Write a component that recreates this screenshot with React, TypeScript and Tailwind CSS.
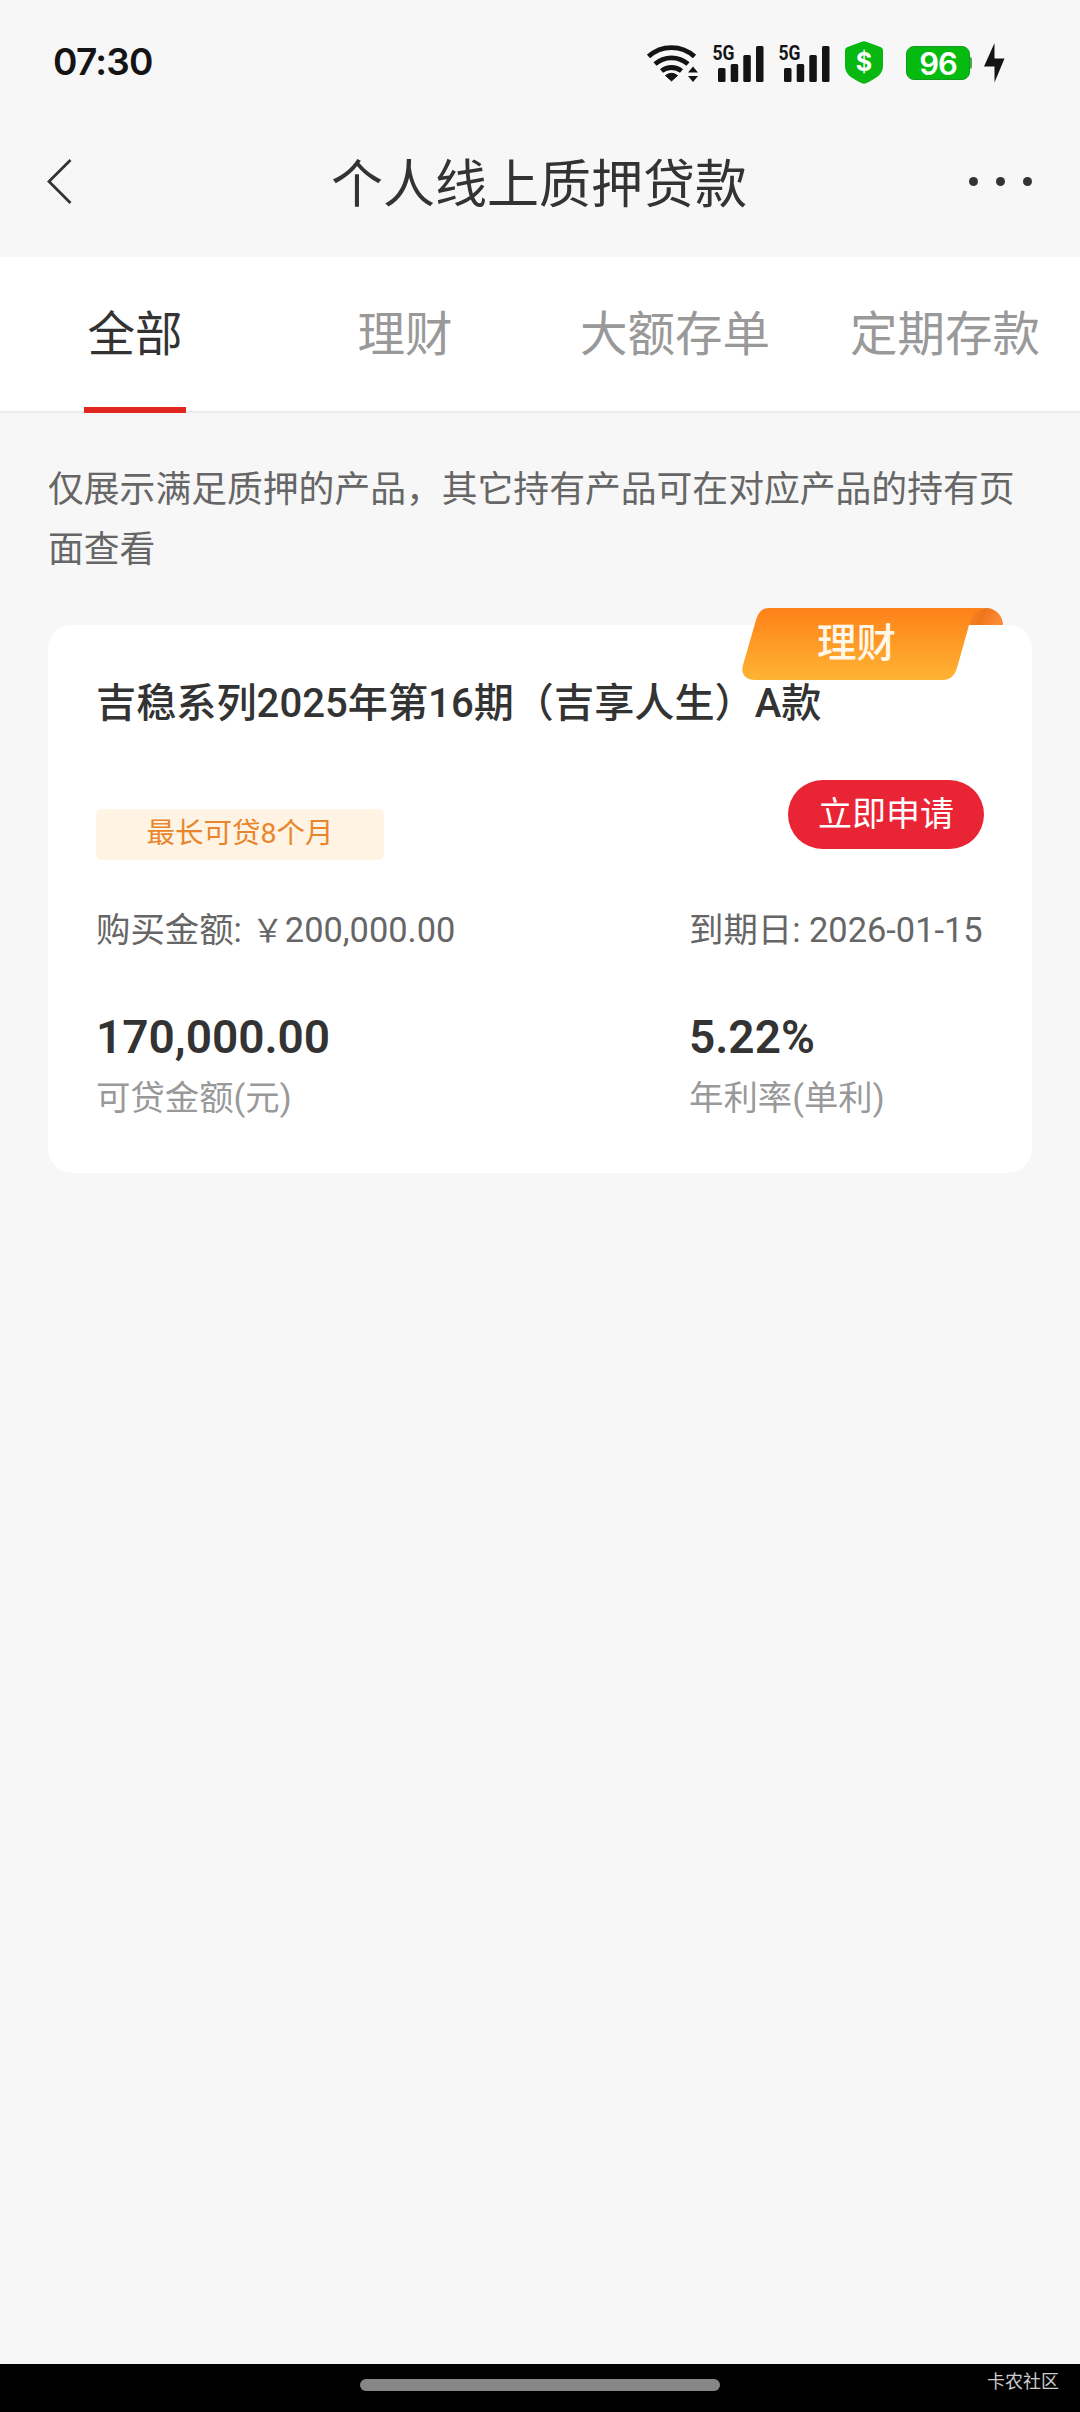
import { useState } from 'react'

const tabs = ['全部', '理财', '大额存单', '定期存款']

const products = [
  {
    type: '理财',
    name: '吉稳系列2025年第16期（吉享人生）A款',
    term: '最长可贷8个月',
    amount: '200,000.00',
    dueDate: '2026-01-15',
    loanable: '170,000.00',
    rate: '5.22%'
  }
]

function WifiIcon() {
  return (
    <svg width="53" height="40" viewBox="0 0 53 40" fill="none" stroke="#141414" strokeWidth="4.8">
      <path d="M1.5 14.5a34 34 0 0 1 46 0" />
      <path d="M8 22a25 25 0 0 1 33 0" />
      <path d="M14.5 29a16 16 0 0 1 20 0" />
      <path d="M18.5 33.5a10 10 0 0 1 12 0L24.5 39z" fill="#141414" stroke="#141414" strokeWidth="1" strokeLinejoin="round" />
      <path d="M41 30.5l5-6 5 6zM41 34l5 6 5-6z" fill="#141414" stroke="none" />
    </svg>
  )
}

function SignalIcon() {
  return (
    <svg className="-mt-[8px]" width="52" height="48" viewBox="0 -8 52 48" fill="#141414">
      <text x="0.5" y="18" fontFamily="Roboto" fontWeight="700" fontSize="21" textLength="22" lengthAdjust="spacingAndGlyphs">
        5G
      </text>
      <rect x="6" y="26" width="7.5" height="14" rx="1.5" />
      <rect x="18.7" y="22" width="7.5" height="18" rx="1.5" />
      <rect x="31.3" y="13" width="7.5" height="27" rx="1.5" />
      <rect x="44" y="4" width="7.5" height="36" rx="1.5" />
    </svg>
  )
}

function ShieldIcon() {
  return (
    <svg width="38" height="43" viewBox="0 0 38 43">
      <path d="M17.5.6a4 4 0 0 1 3 0l15 5.4a3.5 3.5 0 0 1 2.5 3.3V25c0 8-6 12-16.5 17a5 5 0 0 1-5 0C6 37 0 33 0 25V9.3A3.5 3.5 0 0 1 2.5 6z" fill="#06b80f" />
      <text x="19" y="30" textAnchor="middle" fontFamily="Inter" fontWeight="700" fontSize="25" fill="#fff">
        $
      </text>
    </svg>
  )
}

function Battery() {
  return (
    <div className="flex items-center">
      <div className="flex h-[34px] w-[64px] items-center justify-center rounded-[8px] border border-[#149a1c] bg-[#06bb0f] font-[Inter] text-[31px] leading-none font-semibold tracking-[-1px] text-white">
        96
      </div>
      <div className="h-[12px] w-[2px] rounded-r-sm bg-[#4ca851]" />
    </div>
  )
}

function StatusBar() {
  return (
    <div className="flex h-[120px] items-center justify-between pr-[75px] pl-[53px]">
      <span className="pt-[3px] font-[Inter] text-[37px] leading-none font-semibold tracking-[-0.8px] text-[#141414]">07:30</span>
      <div className="flex items-center pt-[4px]">
        <WifiIcon />
        <div className="ml-[12px] flex gap-[14px]">
          <SignalIcon />
          <SignalIcon />
        </div>
        <div className="ml-[15px]">
          <ShieldIcon />
        </div>
        <div className="ml-[23px] pt-[2px]">
          <Battery />
        </div>
        <svg className="mt-[2px] ml-[12px]" width="21" height="40" viewBox="0 0 21 40" fill="#141414">
          <path d="M10.5 0v15.5H20.5L10.5 39.5V23.5H0z" />
        </svg>
      </div>
    </div>
  )
}

function Ribbon({ label }: { label: string }) {
  return (
    <div className="absolute -top-[17px] right-[29px] h-[72px] w-[261px]">
      <svg className="absolute inset-0" width="261" height="72" viewBox="0 0 261 72">
        <defs>
          <linearGradient id="band" x1="0" y1="0" x2="0" y2="1">
            <stop offset="0" stopColor="#fe8119" />
            <stop offset="1" stopColor="#feb433" />
          </linearGradient>
          <linearGradient id="fold" x1="0" y1="0" x2="1" y2="0.3">
            <stop offset="0" stopColor="#fb8a24" />
            <stop offset="0.5" stopColor="#f0761c" />
            <stop offset="1" stopColor="#fb8a34" />
          </linearGradient>
        </defs>
        <path d="M226 17C229 6 235 0 244 0C254 0 261 8 261 17z" fill="url(#fold)" />
        <path d="M27 0H244C235 1 230 7 227 17L215 60C212.5 68 208 72 201 72H13C3 72-1.5 66 1 57L14 12C16.5 4 20 0 27 0z" fill="url(#band)" />
      </svg>
      <span className="relative block pr-[32px] text-center text-[39.5px] leading-[72px] font-medium text-[#fff8ea]">{label}</span>
    </div>
  )
}

function ProductCard({ product }: { product: (typeof products)[number] }) {
  return (
    <div className="relative mx-[48px] h-[548px] rounded-[24px] bg-white px-[48px] pt-[49px]">
      <Ribbon label={product.type} />
      <h2 className="relative text-[40.15px] leading-[60px] font-medium whitespace-nowrap">{product.name}</h2>

      <div className="mt-[46px] flex items-start justify-between">
        <div className="mt-[29px] h-[51px] w-[288px] rounded-[6px] bg-[#fff3e4] text-center text-[28.5px] leading-[49px] text-[#e9852c]">{product.term}</div>
        <button className="h-[69px] w-[196px] rounded-full bg-[#e92434] text-[34px] leading-[69px] text-white">立即申请</button>
      </div>

      <div className="mt-[45px] flex h-[50px] text-[34.4px] leading-[50px] text-[#666]">
        <span className="w-[593px]">
          购买金额: <span className="inline-block w-[34.4px] text-center text-[32px] leading-none">￥</span>
          {product.amount}
        </span>
        <span className="whitespace-nowrap">到期日: {product.dueDate}</span>
      </div>

      <div className="mt-[52px] flex">
        <div className="w-[593px]">
          <p className="text-[46px] leading-[60px] font-semibold">{product.loanable}</p>
          <p className="mt-[6px] text-[34.4px] leading-[50px] text-[#999]">可贷金额(元)</p>
        </div>
        <div>
          <p className="text-[46px] leading-[60px] font-semibold">{product.rate}</p>
          <p className="mt-[6px] text-[34.4px] leading-[50px] text-[#999]">年利率(单利)</p>
        </div>
      </div>
    </div>
  )
}

export default function App() {
  const [active, setActive] = useState(0)

  return (
    <div lang="zh-CN" className="flex h-[2412px] w-[1080px] flex-col bg-[#f7f7f7] font-[Roboto,'Noto_Sans_CJK_SC',sans-serif] text-[#333]">
      <StatusBar />

      <header className="flex h-[137px] items-start justify-between pr-[45px] pl-[46px]">
        <svg className="mt-[38px] w-[63px]" width="63" height="46" viewBox="0 0 63 46" fill="none" stroke="#333" strokeWidth="2.8">
          <path d="M24.5 2L3 23.5L24.5 45" />
        </svg>
        <h1 className="text-[52px] leading-[132px]">个人线上质押贷款</h1>
        <div className="mt-[57px] flex w-[66px] gap-[18px]">
          <i className="size-[9px] shrink-0 rounded-full bg-[#333]" />
          <i className="size-[9px] shrink-0 rounded-full bg-[#333]" />
          <i className="size-[9px] shrink-0 rounded-full bg-[#333]" />
        </div>
      </header>

      <nav className="grid h-[156px] grid-cols-4 border-b-2 border-[#ebebeb] bg-white">
        {tabs.map((tab, i) => (
          <button
            key={tab}
            onClick={() => setActive(i)}
            className={`relative h-[154px] pt-[3px] text-[47.5px] leading-[151px] whitespace-nowrap ${i === active ? 'text-[#333]' : 'text-[#999]'}`}
          >
            {tab}
            {i === active && <span className="absolute -bottom-[2px] left-[84px] h-[6px] w-[102px] bg-[#e1251f]" />}
          </button>
        ))}
      </nav>

      <p className="mt-[47px] mb-[45px] px-[48px] text-[35.8px] leading-[60px] text-[#666]">仅展示满足质押的产品，其它持有产品可在对应产品的持有页面查看</p>

      {products.map((product) => (
        <ProductCard key={product.name} product={product} />
      ))}

      <footer className="relative mt-auto flex h-[48px] justify-center bg-black pt-[15px]">
        <div className="h-[12px] w-[360px] rounded-full bg-[#868686]" />
        <span className="absolute top-[5px] right-[21px] text-[18px] leading-[26px] text-[#ccc]">卡农社区</span>
      </footer>
    </div>
  )
}
